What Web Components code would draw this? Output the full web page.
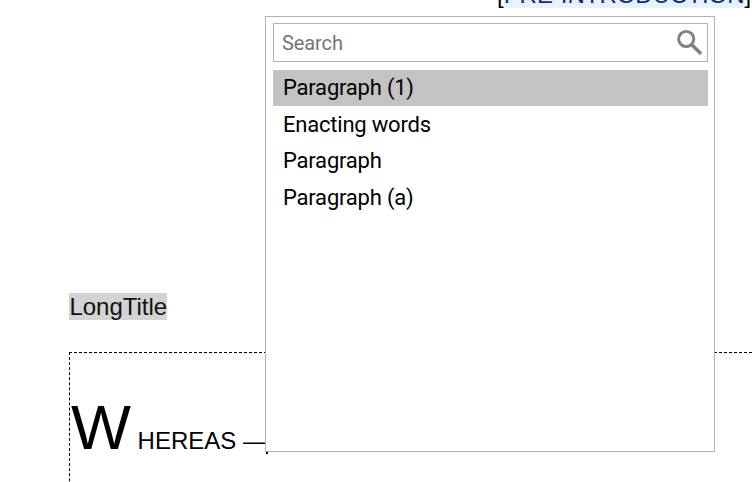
<!DOCTYPE html>
<html lang="en">
<head>
<meta charset="utf-8">
<title>Document editor</title>
<style>
    html, body { margin: 0; height: 100%; overflow: hidden; background: #fff; }
</style>
</head>
<body>
<editor-page>
    <section-marker>PRE-INTRODUCTION</section-marker>
    <element-label>LongTitle</element-label>
    <drop-cap-block initial="W">HEREAS —</drop-cap-block>
    <element-picker slot="popup">
        <search-box slot="search" placeholder="Search"></search-box>
        <picker-item selected>Paragraph (1)</picker-item>
        <picker-item>Enacting words</picker-item>
        <picker-item>Paragraph</picker-item>
        <picker-item>Paragraph (a)</picker-item>
    </element-picker>
</editor-page>

<script>
(
    function () {

        /**
        * Defines a custom element whose shadow root is cloned from the given markup
        */
        function define(name, html, connected) {
            const template = document.createElement('template');
            template.innerHTML = html;

            window.customElements.define(name, class extends HTMLElement {
                constructor() {
                    super();
                    this.attachShadow({ mode: 'open' });
                    this.shadowRoot.appendChild(template.content.cloneNode(true));
                }

                connectedCallback() {
                    if (connected) {
                        connected(this, this.shadowRoot);
                    }
                }
            });
        }

        // The document surface, popups lie over it
        define('editor-page',
            `<style>
                :host { display: block; position: relative; height: 482px; overflow: hidden; font: 24px/27px "Liberation Sans", Arial, sans-serif; color: #000; }
                .document { display: flex; flex-direction: column; margin-left: 69px; }
                ::slotted([slot="popup"]) { position: absolute; left: 265px; top: 16px; }
            </style>
            <div class="document"><slot></slot></div>
            <slot name="popup"></slot>`);

        // Bracketed section name
        define('section-marker',
            `<style>
                :host { display: block; align-self: flex-start; margin: -19px 0 0 428px; height: 27px; white-space: nowrap; letter-spacing: -0.03px; }
                span { display: inline-block; height: 27px; background: #e8f1fc; color: #003087; }
            </style>[<span><slot></slot></span>]`);

        // Grey tag with the name of an element
        define('element-label',
            `<style>
                :host { display: block; align-self: flex-start; box-sizing: border-box; width: 98px; padding-left: 0.5px; margin-top: 285px; height: 27px; background: #d3d3d3; color: #111; letter-spacing: -0.04px; }
            </style><slot></slot>`);

        // Dashed paragraph with an enlarged first letter and the caret at its end
        define('drop-cap-block',
            `<style>
                :host { display: flex; align-items: baseline; box-sizing: border-box; height: 200px; margin-top: 32px; padding: 37px 0 0 1px; border: 1px dashed #000; border-right: 0; white-space: nowrap; }
                .initial { font-size: 63.5px; line-height: 74px; width: 66.6px; }
                .caret { width: 2px; height: 24px; margin-left: -0.6px; background: #000; align-self: flex-start; margin-top: 40px; }
            </style>
            <span class="initial"></span><span><slot></slot></span><span class="caret"></span>`,
            function (host, root) {
                root.querySelector('.initial').textContent = host.getAttribute('initial');
            });

        define('element-picker',
            `<style>
                :host { display: flex; flex-direction: column; box-sizing: border-box; width: 450px; height: 436px; padding: 6px 6px 0 7px; border: 1px solid #b3b3b3; background: #fff; font-family: Roboto, sans-serif; }
                .list { margin-top: 8px; }
            </style>
            <slot name="search"></slot>
            <div class="list"><slot></slot></div>`);

        define('search-box',
            `<style>
                :host { display: flex; align-items: center; justify-content: space-between; box-sizing: border-box; height: 39px; padding: 1px 3px 0 8px; border: 1px solid #b3b3b3; font-size: 20px; letter-spacing: -0.1px; color: #757575; }
                svg { display: block; }
            </style>
            <span></span>
            <svg width="28" height="28" viewBox="0 0 28 28" fill="none" stroke="#808080">
                <circle cx="10.2" cy="10" r="7.6" stroke-width="2.9"/>
                <path d="M15.5 15.4L25 24.7" stroke-width="3.5"/>
            </svg>`,
            function (host, root) {
                root.querySelector('span').textContent = host.getAttribute('placeholder');
            });

        define('picker-item',
            `<style>
                :host { display: block; height: 36px; margin-bottom: 0.6px; padding-left: 10px; font-size: 22px; line-height: 36px; letter-spacing: -0.21px; }
                :host([selected]) { background: #c3c3c3; }
            </style><slot></slot>`);

    }
)();
</script>
</body>
</html>
